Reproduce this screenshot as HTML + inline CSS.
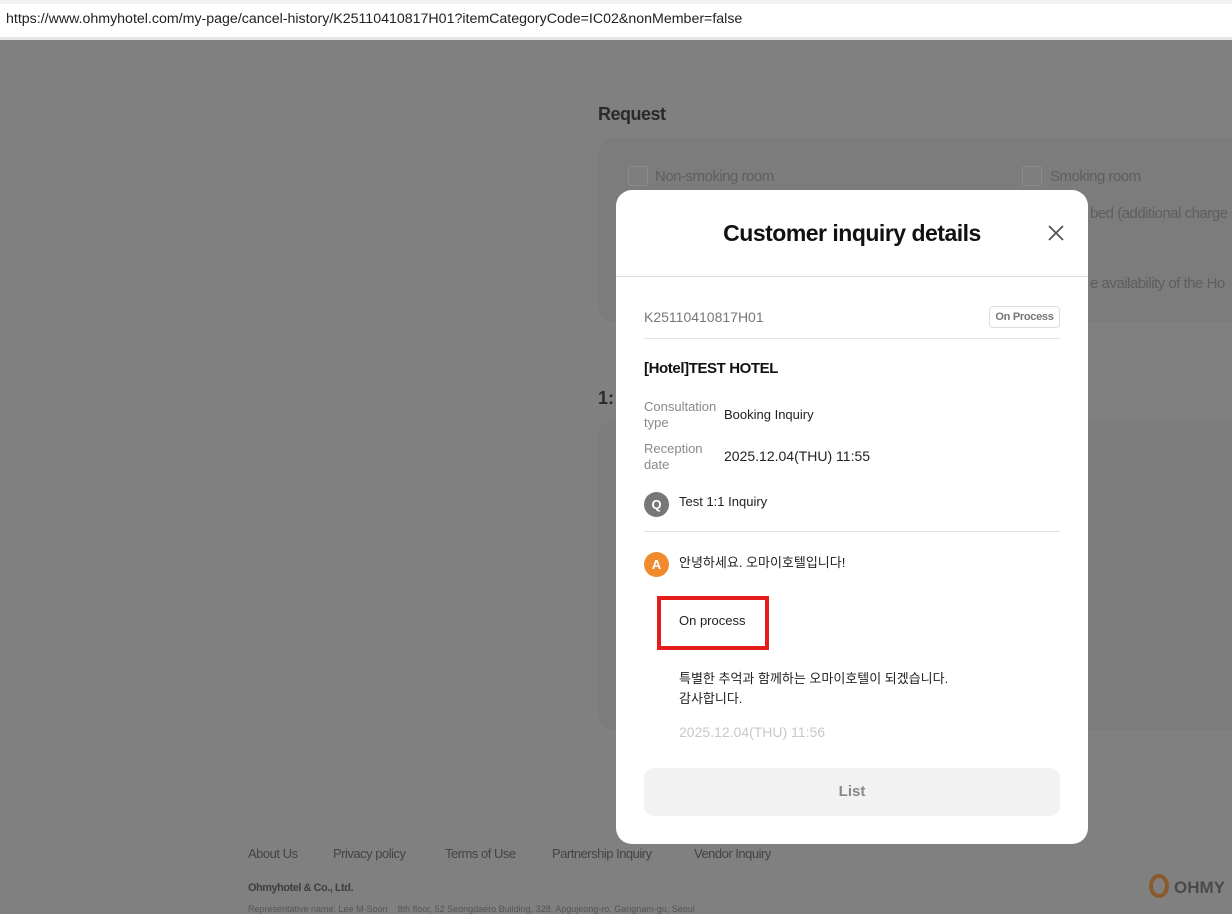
<!DOCTYPE html>
<html><head><meta charset="utf-8"><style>
*{margin:0;padding:0;box-sizing:border-box}
body{width:1232px;height:912px;overflow:hidden;background:#808080;font-family:"Liberation Sans","Noto Sans CJK KR",sans-serif;position:relative}
.url{position:absolute;left:0;top:0;width:1232px;height:40px;background:#fff;border-top:4px solid #f1f1f1;border-bottom:3px solid #e6e6e6}
.url span{position:absolute;left:6px;top:7px;font-size:14.2px;color:#222;white-space:nowrap}
.abs{position:absolute;white-space:nowrap}
.card{position:absolute;background:#7c7c7c;border-radius:16px}
.modal{position:absolute;left:616px;top:190px;width:472px;height:654px;background:#fff;border-radius:16px}
.sm{font-size:13px;color:#8a8a8a;line-height:16px}
.tx{font-size:14px;color:#222}
.circ{position:absolute;width:25px;height:25px;border-radius:50%;color:#fff;font-weight:bold;font-size:13px;text-align:center;line-height:25px}
.ft{position:absolute;top:846px;font-size:13px;color:#444;letter-spacing:-0.5px}
</style></head><body>
<div class="url"><span>https://www.ohmyhotel.com/my-page/cancel-history/K25110410817H01?itemCategoryCode=IC02&amp;nonMember=false</span></div>
<div class="abs" style="left:598px;top:104px;font-size:18px;font-weight:bold;color:#2a2a2a;letter-spacing:-0.5px">Request</div>
<div class="card" style="left:598px;top:138px;width:660px;height:184px"></div>
<div class="abs" style="left:628px;top:166px;width:20px;height:20px;border:1px solid #8a8a8a;border-radius:3px;background:#7e7e7e"></div>
<div class="abs" style="left:655px;top:168px;font-size:15px;color:#5e5e5e;letter-spacing:-0.5px">Non-smoking room</div>
<div class="abs" style="left:1022px;top:166px;width:20px;height:20px;border:1px solid #8a8a8a;border-radius:3px;background:#7e7e7e"></div>
<div class="abs" style="left:1050px;top:168px;font-size:15px;color:#5e5e5e;letter-spacing:-0.5px">Smoking room</div>
<div class="abs" style="left:1090px;top:205px;font-size:15px;color:#5e5e5e;letter-spacing:-0.5px">bed (additional charge</div>
<div class="abs" style="left:1090px;top:275px;font-size:15px;color:#5e5e5e;letter-spacing:-0.5px">e availability of the Ho</div>
<div class="abs" style="left:598px;top:388px;font-size:18px;font-weight:bold;color:#2a2a2a">1:</div>
<div class="card" style="left:598px;top:420px;width:660px;height:310px"></div>
<div class="ft" style="left:248px">About Us</div>
<div class="ft" style="left:333px">Privacy policy</div>
<div class="ft" style="left:445px">Terms of Use</div>
<div class="ft" style="left:552px">Partnership Inquiry</div>
<div class="ft" style="left:694px">Vendor Inquiry</div>
<div class="abs" style="left:248px;top:882px;font-size:11px;font-weight:bold;color:#3e3e3e;letter-spacing:-0.5px">Ohmyhotel &amp; Co., Ltd.</div>
<div class="abs" style="left:248px;top:904px;font-size:9px;color:#555">Representative name: Lee M-Soon &nbsp;&nbsp; 8th floor, 52 Seongdaero Building, 328, Apgujeong-ro, Gangnam-gu, Seoul</div>
<div class="abs" style="left:1149px;top:874px;width:20px;height:24px;border:4px solid #8a5a2a;border-radius:50%"></div>
<div class="abs" style="left:1174px;top:878px;font-size:17px;font-weight:bold;color:#4a4a4a">OHMY</div>

<div class="modal">
 <div class="abs" style="left:0;top:30px;width:472px;text-align:center;font-size:23px;font-weight:bold;color:#111;letter-spacing:-0.5px">Customer inquiry details</div>
 <svg class="abs" style="left:431px;top:34px" width="18" height="18" viewBox="0 0 18 18"><path d="M2 2L16 16M16 2L2 16" stroke="#555" stroke-width="1.8"/></svg>
 <div class="abs" style="left:0;top:86px;width:472px;height:1px;background:#dedede"></div>
 <div class="abs" style="left:28px;top:119px;font-size:14px;color:#777">K25110410817H01</div>
 <div class="abs" style="left:373px;top:116px;width:71px;height:22px;border:1px solid #ddd;border-radius:4px;font-size:11px;color:#777;text-align:center;line-height:20px;font-weight:bold;letter-spacing:-0.3px">On Process</div>
 <div class="abs" style="left:28px;top:148px;width:416px;height:1px;background:#e2e2e2"></div>
 <div class="abs" style="left:28px;top:170px;font-size:15px;font-weight:bold;color:#111;letter-spacing:-0.4px">[Hotel]TEST HOTEL</div>
 <div class="abs sm" style="left:28px;top:209px">Consultation<br>type</div>
 <div class="abs tx" style="left:108px;top:217px;font-size:13px">Booking Inquiry</div>
 <div class="abs sm" style="left:28px;top:251px">Reception<br>date</div>
 <div class="abs tx" style="left:108px;top:258px">2025.12.04(THU) 11:55</div>
 <div class="circ" style="left:28px;top:302px;background:#777">Q</div>
 <div class="abs tx" style="left:63px;top:304px;font-size:13px">Test 1:1 Inquiry</div>
 <div class="abs" style="left:28px;top:341px;width:416px;height:1px;background:#e2e2e2"></div>
 <div class="circ" style="left:28px;top:362px;background:#f08a2c">A</div>
 <div class="abs tx" style="left:63px;top:362px;font-size:13px">안녕하세요. 오마이호텔입니다!</div>
 <div class="abs" style="left:41px;top:406px;width:112px;height:54px;border:4px solid #e51c1c"></div>
 <div class="abs tx" style="left:63px;top:423px;font-size:13px">On process</div>
 <div class="abs tx" style="left:63px;top:479px;font-size:13px;line-height:20px">특별한 추억과 함께하는 오마이호텔이 되겠습니다.<br>감사합니다.</div>
 <div class="abs" style="left:63px;top:534px;font-size:14px;color:#c8c8c8">2025.12.04(THU) 11:56</div>
 <div class="abs" style="left:28px;top:578px;width:416px;height:48px;background:#f2f2f2;border-radius:10px;text-align:center;line-height:48px;font-size:15px;font-weight:bold;color:#888">List</div>
</div>
</body></html>
